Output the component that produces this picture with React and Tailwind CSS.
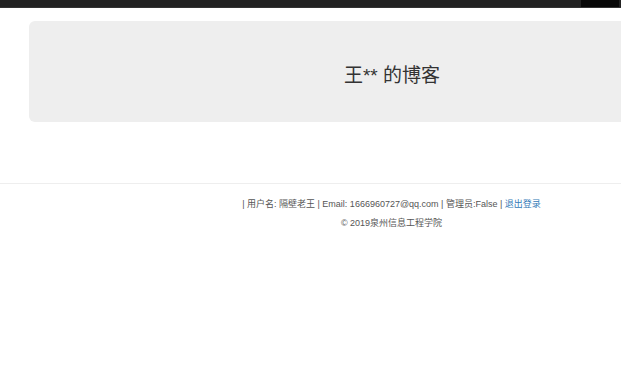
import React from 'react';

const font = { fontFamily: '"Liberation Sans", "Noto Sans CJK SC", sans-serif' };

const App = () => {
  return (
    <div className="w-[621px] h-[383px] overflow-hidden bg-white" style={font}>
      <div className="w-[783px]">
        {/* Navbar (scrolled, only the bottom edge shows) */}
        <div className="flex h-[8px] bg-[#222] border-b border-[#333]">
          <div className="w-[581px]" />
          <div className="w-[38px] bg-[#080808]" />
        </div>

        {/* Jumbotron */}
        <div className="ml-[29px] mt-[13px] w-[726px] h-[101px] rounded-md bg-[#eee] flex items-center justify-center pt-[8px]">
          <h3 className="text-[19px] text-[#333] leading-none">王** 的博客</h3>
        </div>

        {/* Footer */}
        <div className="mt-[61px] border-t border-[#eee] pt-[11px] text-center text-[9px] text-[#555] leading-[19px]">
          <p>
            | 用户名: 隔壁老王 | Email: 1666960727@qq.com | 管理员:False |{' '}
            <a href="#" className="text-[#337ab7]">退出登录</a>
          </p>
          <p>© 2019泉州信息工程学院</p>
        </div>
      </div>
    </div>
  );
};

export default App;
